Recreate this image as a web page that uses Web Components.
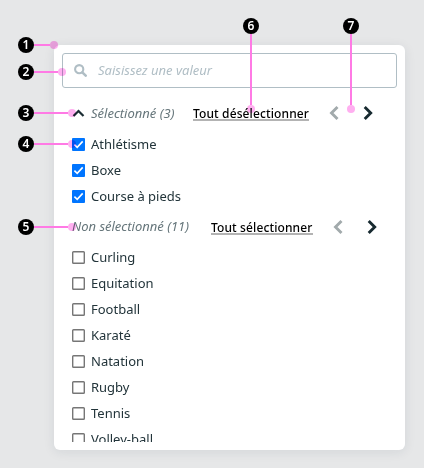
<!DOCTYPE html>
<html lang="fr">
<head>
<meta charset="utf-8">
<title>Liste de sélection</title>
<style>
html,body{margin:0;height:100%;background:#e6e7e8;overflow:hidden}
body{position:relative;width:424px;height:468px;font:13px/26px "Noto Sans","Open Sans",sans-serif;color:#22343a}
select-card{margin:45px 0 0 54px}
</style>
</head>
<body>
<select-card>
  <search-field slot="search">Saisissez une valeur</search-field>
  <option-group label="Sélectionné (3)" action="Tout désélectionner" open style="--head-h:38px;--label-w:121px;--link-w:116px;--link-top:4px;--label-top:2px;--nav-top:2px">
    <check-row checked>Athlétisme</check-row>
    <check-row checked>Boxe</check-row>
    <check-row checked>Course à pieds</check-row>
  </option-group>
  <option-group label="Non sélectionné (11)" action="Tout sélectionner" style="--head-h:35px;--label-w:139px;--link-w:102px;--link-top:3px;--label-top:-2px;--nav-top:0px">
    <check-row>Curling</check-row>
    <check-row>Equitation</check-row>
    <check-row>Football</check-row>
    <check-row>Karaté</check-row>
    <check-row>Natation</check-row>
    <check-row>Rugby</check-row>
    <check-row>Tennis</check-row>
    <check-row>Volley-ball</check-row>
  </option-group>
</select-card>
<call-out style="left:18px;top:37px;--len:16px">1</call-out>
<call-out style="left:18px;top:64px;--len:24px">2</call-out>
<call-out style="left:18px;top:105px;--len:34px">3</call-out>
<call-out style="left:18px;top:136px;--len:34px">4</call-out>
<call-out style="left:18px;top:219px;--len:34px">5</call-out>
<call-out down style="left:243px;top:18px;--len:71px">6</call-out>
<call-out down style="left:343px;top:18px;--len:71px">7</call-out>
<script>
const define = (name, html, setup) => customElements.define(name, class extends HTMLElement {
  constructor() {
    super();
    this.attachShadow({mode: 'open'}).innerHTML = html;
  }
  connectedCallback() { if (setup) setup(this, this.shadowRoot); }
});

define('select-card', `<style>
:host{display:flex;flex-direction:column;box-sizing:border-box;width:351px;height:405px;padding:8px;background:#fff;border-radius:6px;box-shadow:0 2px 12px rgba(20,40,70,.09)}
.list{flex:1;min-height:0;overflow:hidden;padding:0 10px;margin-top:5px}
</style><slot name="search"></slot><div class="list"><slot></slot></div>`);

define('search-field', `<style>
:host{display:flex;align-items:center;box-sizing:border-box;height:35px;border:1px solid #b0bec5;border-radius:3px;padding:0 0 1px 11px;gap:11px;font-style:italic;color:#b0bec5}
svg{display:block;width:13px;height:13px}
</style><svg viewBox="0 0 13 13" fill="none" stroke="#b0bec5"><circle cx="5.2" cy="5.2" r="4.1" stroke-width="2.1"/><path d="M8.3 8.3 11.7 11.7" stroke-width="2.5" stroke-linecap="round"/></svg><slot></slot>`);

define('option-group', `<style>
:host{display:block}
header{display:flex;align-items:center;height:var(--head-h);white-space:nowrap}
.label{display:flex;align-items:center;width:var(--label-w);font-style:italic;color:#66767b;gap:6px;margin-top:var(--label-top)}
.label svg{display:none}
:host([open]) .label svg{display:block;width:13px;height:13px}
a{width:var(--link-w);font-size:12px;font-weight:500;letter-spacing:.12px;line-height:13px;color:#000;border-bottom:2px solid #b3b3b3;height:12px;margin-top:var(--link-top)}
nav{display:flex;gap:21px;margin-left:19px;margin-top:var(--nav-top)}
nav svg{display:block;width:13px;height:16px}
</style><header><div class="label"><svg viewBox="0 0 13 13" fill="none" stroke="#1c2e34" stroke-width="2.2"><path d="M1.5 9 6.5 4 11.5 9"/></svg><span></span></div><a></a>
<nav><svg viewBox="0 0 13 16" fill="none" stroke="#a2aaac" stroke-width="2.9"><path d="M9.5 2 3.5 8 9.5 14"/></svg><svg viewBox="0 0 13 16" fill="none" stroke="#172a30" stroke-width="2.9"><path d="M2.7 2 8.7 8 2.7 14"/></svg></nav></header><slot></slot>`, (el, root) => {
  root.querySelector('.label span').textContent = el.getAttribute('label');
  root.querySelector('a').textContent = el.getAttribute('action');
});

define('check-row', `<style>
:host{display:flex;align-items:center;height:26px;gap:6px}
svg{display:block;width:13px;height:13px;flex:none}
.on{display:none}
:host([checked]) .on{display:block}
:host([checked]) .off{display:none}
</style><svg class="off" viewBox="0 0 13 13"><rect x=".7" y=".7" width="11.6" height="11.6" rx=".8" fill="#fff" stroke="#767676" stroke-width="1.4"/></svg><svg class="on" viewBox="0 0 13 13"><rect width="13" height="13" rx="1" fill="#0075ff"/><path d="M2.4 6.7 5.2 9.4 10.7 3.4" fill="none" stroke="#fff" stroke-width="1.6"/></svg><slot></slot>`);

define('call-out', `<style>
:host{position:absolute;display:flex;align-items:center}
:host([down]){flex-direction:column}
b{display:grid;place-items:center;width:16px;height:16px;border-radius:50%;background:#000;color:#fff;font-size:12px;line-height:16px;font-weight:600}
.line{width:var(--len);height:2px;background:#ff7ae5}
:host([down]) .line{width:2px;height:var(--len)}
.dot{width:8px;height:8px;border-radius:50%;background:#ffaff0;mix-blend-mode:multiply}
</style><b><slot></slot></b><span class="line"></span><span class="dot"></span>`);
</script>
</body>
</html>
